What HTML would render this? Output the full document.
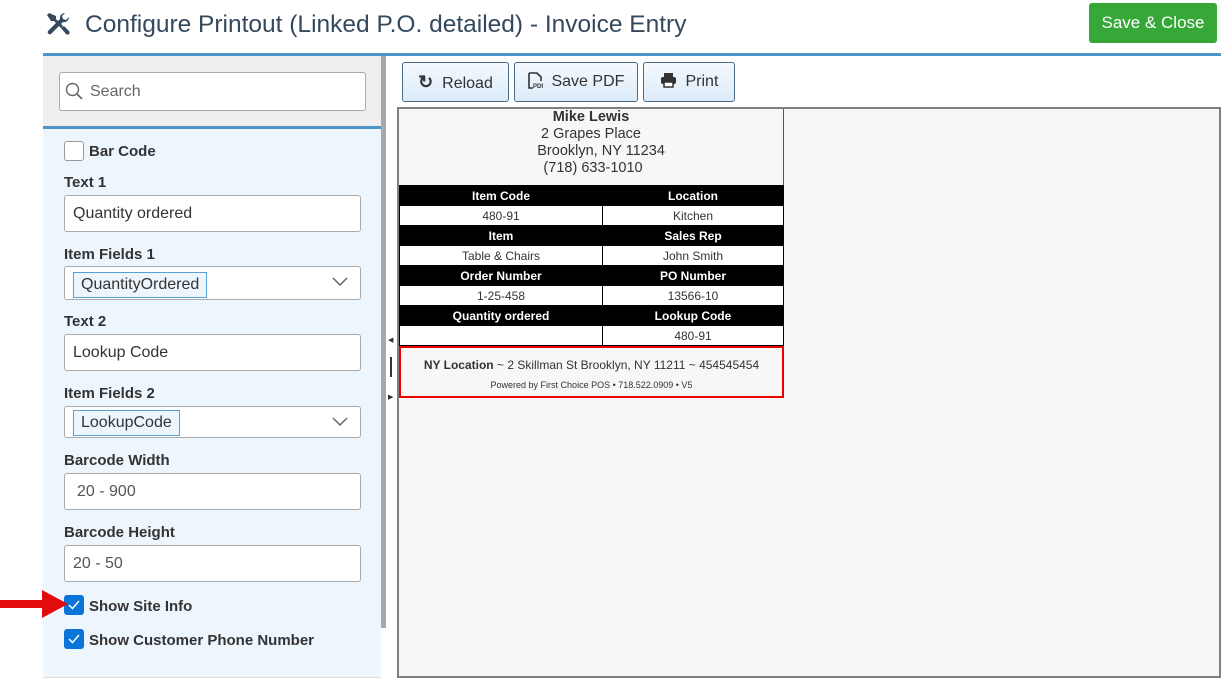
<!DOCTYPE html>
<html><head><meta charset="utf-8"><style>
*{box-sizing:border-box;margin:0;padding:0}
body{width:1227px;height:684px;background:#fff;font-family:"Liberation Sans",sans-serif;position:relative;overflow:hidden;color:#333}
.a{position:absolute}
.lbl{position:absolute;left:64px;font-weight:bold;font-size:15px;color:#333}
.inp{position:absolute;left:64px;width:297px;height:37px;background:#fff;border:1px solid #aaa;border-radius:3px;font-size:16px;padding-left:8px;line-height:35px;color:#333}
.tag{position:absolute;left:8px;top:5px;height:26px;border:1px solid #5a9fd4;background:#eef6fd;padding:0 7px;line-height:24px}
.chev{position:absolute;right:12px;top:10px}
.cb{position:absolute;left:64px;width:20px;height:20px;border-radius:3px}
.btn{position:absolute;top:62px;height:40px;border:1px solid #4a6a8a;border-radius:3px;background:linear-gradient(#f4f9fe,#dcebf8);font-size:16px;color:#333;line-height:38px;text-align:center}
table{border-collapse:collapse;position:absolute;left:399px;top:185px;width:384px;font-size:12px;table-layout:fixed}
td{height:20px;text-align:center;border:1px solid #000;padding:0}
tr.h td{background:#000;color:#fff;font-weight:bold}
tr.d td{background:#fff;color:#333}
</style></head><body>
<svg class="a" style="left:45px;top:11px" width="26" height="26" viewBox="0 0 26 26"><g fill="#34495e"><path d="M4 2 L2 4 L6 10 L9 10 L16 17 L18 15 L11 8 L11 5 Z"/><path d="M20 2 a5 5 0 0 0-5 6 L3 20 a2.2 2.2 0 0 0 3 3 L18 11 a5 5 0 0 0 6-5 l-3 3-3-1-1-3 3-3z"/><path d="M16 17 l3-2 5 5 a2 2 0 0 1-3 3z"/></g></svg>
<div class="a" style="left:85px;top:11px;font-size:24.5px;color:#34495e;white-space:nowrap">Configure Printout (Linked P.O. detailed) - Invoice Entry</div>
<div class="a" style="left:1089px;top:3px;width:128px;height:40px;background:#35a838;border-radius:3px;color:#fff;font-size:17px;text-align:center;line-height:40px">Save &amp; Close</div>
<div class="a" style="left:43px;top:53px;width:1178px;height:3px;background:#4f95c8"></div>
<div class="a" style="left:43px;top:56px;width:338px;height:70px;background:#eeeeee"></div>
<div class="a" style="left:43px;top:126px;width:338px;height:3px;background:#4f95c8"></div>
<div class="a" style="left:43px;top:129px;width:338px;height:549px;background:#eef6fd;border-bottom:1px solid #ddd"></div>
<div class="a" style="left:381px;top:56px;width:5px;height:572px;background:#a8a8a8"></div>
<div class="a" style="left:59px;top:72px;width:307px;height:39px;background:#fff;border:1px solid #aaa;border-radius:3px"></div>
<svg class="a" style="left:65px;top:82px" width="18" height="18" viewBox="0 0 18 18"><circle cx="7.5" cy="7.5" r="6" fill="none" stroke="#666" stroke-width="1.4"/><path d="M12 12 L17 17" stroke="#666" stroke-width="1.6"/></svg>
<div class="a" style="left:90px;top:83px;font-size:16px;color:#666">Search</div>
<div class="cb" style="top:141px;background:#fff;border:1px solid #999"></div>
<div class="lbl" style="left:89px;top:143px">Bar Code</div>
<div class="lbl" style="top:174px">Text 1</div>
<div class="inp" style="top:195px">Quantity ordered</div>
<div class="lbl" style="top:246px">Item Fields 1</div>
<div class="inp" style="top:266px;height:34px"><span class="tag">QuantityOrdered</span><svg class="chev" width="16" height="10"><path d="M1 1 L8 8 L15 1" fill="none" stroke="#666" stroke-width="1.5"/></svg></div>
<div class="lbl" style="top:313px">Text 2</div>
<div class="inp" style="top:334px">Lookup Code</div>
<div class="lbl" style="top:385px">Item Fields 2</div>
<div class="inp" style="top:406px;height:32px"><span class="tag" style="top:3px">LookupCode</span><svg class="chev" style="top:10px" width="16" height="10"><path d="M1 1 L8 8 L15 1" fill="none" stroke="#666" stroke-width="1.5"/></svg></div>
<div class="lbl" style="top:452px">Barcode Width</div>
<div class="inp" style="top:473px;padding-left:12px;color:#555">20 - 900</div>
<div class="lbl" style="top:524px">Barcode Height</div>
<div class="inp" style="top:545px;color:#555">20 - 50</div>
<div class="cb" style="top:595px;background:#0b74d8"></div>
<svg class="a" style="left:67px;top:599px" width="14" height="12"><path d="M2 6 L5.5 9.5 L12 2" fill="none" stroke="#fff" stroke-width="1.5"/></svg>
<div class="lbl" style="left:89px;top:598px">Show Site Info</div>
<div class="cb" style="top:629px;background:#0b74d8"></div>
<svg class="a" style="left:67px;top:633px" width="14" height="12"><path d="M2 6 L5.5 9.5 L12 2" fill="none" stroke="#fff" stroke-width="1.5"/></svg>
<div class="lbl" style="left:89px;top:632px">Show Customer Phone Number</div>
<svg class="a" style="left:0;top:588px" width="68" height="32"><path d="M0 12 L42 12 L42 2 L68 16 L42 30 L42 20 L0 20Z" fill="#e30c0c"/></svg>
<div class="btn" style="left:402px;width:107px"><span style="font-weight:bold;font-size:18px">&#8635;</span>&nbsp; Reload</div>
<div class="btn" style="left:514px;width:124px"><svg width="15" height="17" viewBox="0 0 15 17" style="vertical-align:-3px"><path d="M1 1 H9 L13 5 V9 M1 1 V16 H5" fill="none" stroke="#333" stroke-width="1.6"/><text x="5" y="16" font-size="6" font-family="Liberation Sans" font-weight="bold" fill="#333">PDF</text></svg>&nbsp; Save PDF</div>
<div class="btn" style="left:643px;width:92px"><svg width="17" height="16" viewBox="0 0 17 16" style="vertical-align:-2px"><rect x="4" y="1" width="9" height="4" fill="#333"/><rect x="1" y="5" width="15" height="7" rx="2" fill="#333"/><rect x="4" y="10" width="9" height="5" fill="#fff" stroke="#333" stroke-width="1.5"/></svg>&nbsp; Print</div>
<div class="a" style="left:397px;top:107px;width:824px;height:571px;border:2px solid #808080;background:#f7f7f7"></div>
<div class="a" style="left:399px;top:109px;width:385px;height:289px;border-right:1px solid #555;background:#f7f7f7"></div>
<div class="a" style="left:399px;top:109px;width:384px;text-align:center;font-size:14.5px;line-height:17px;color:#333"><b>Mike Lewis</b><br>2 Grapes Place<br>&nbsp;&nbsp;&nbsp;&nbsp;&nbsp;Brooklyn, NY 11234<br>&nbsp;(718) 633-1010</div>
<table>
<colgroup><col style="width:203px"><col style="width:181px"></colgroup>
<tr class="h"><td>Item Code</td><td>Location</td></tr>
<tr class="d"><td>480-91</td><td>Kitchen</td></tr>
<tr class="h"><td>Item</td><td>Sales Rep</td></tr>
<tr class="d"><td>Table &amp; Chairs</td><td>John Smith</td></tr>
<tr class="h"><td>Order Number</td><td>PO Number</td></tr>
<tr class="d"><td>1-25-458</td><td>13566-10</td></tr>
<tr class="h"><td>Quantity ordered</td><td>Lookup Code</td></tr>
<tr class="d"><td></td><td>480-91</td></tr>
</table>
<div class="a" style="left:399px;top:346px;width:385px;height:52px;border:2px solid #e00;background:#f7f7f7;text-align:center">
<div style="font-size:12px;margin-top:10px;color:#333"><b>NY Location</b> ~ 2 Skillman St Brooklyn, NY 11211 ~ 454545454</div>
<div style="font-size:9px;margin-top:8px;color:#333">Powered by First Choice POS • 718.522.0909 • V5</div></div>
<div class="a" style="left:388px;top:336px;font-size:7px;color:#333">◀</div>
<div class="a" style="left:390px;top:357px;width:2px;height:20px;background:#333"></div>
<div class="a" style="left:388px;top:393px;font-size:7px;color:#333">▶</div>
</body></html>
